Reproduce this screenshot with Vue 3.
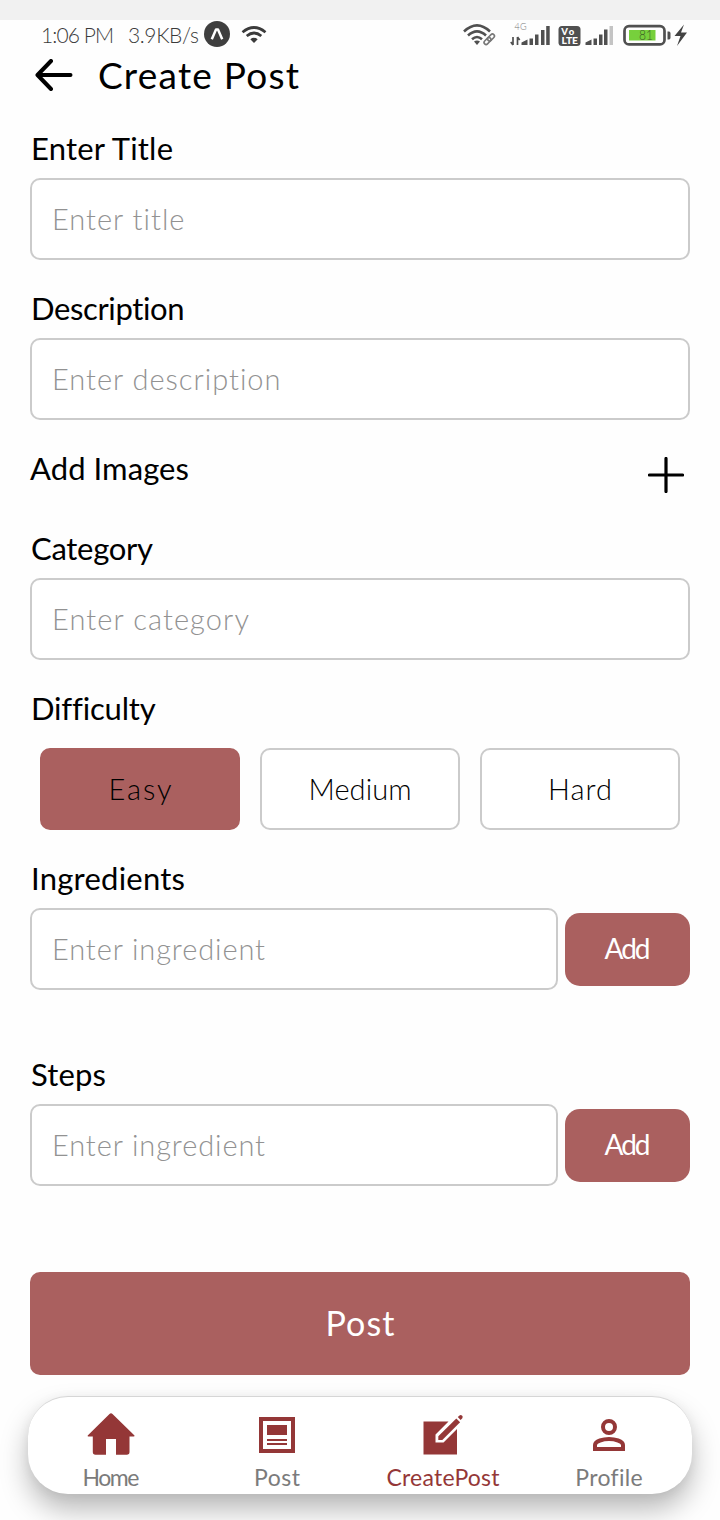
<script setup>
import { ref } from 'vue'

const difficulty = ref('Easy')
const levels = [
  { name: 'Easy', width: 63 },
  { name: 'Medium', width: 103 },
  { name: 'Hard', width: 64 },
]
const lists = [
  { label: 'Ingredients', width: 154 },
  { label: 'Steps', width: 75 },
]

// Tracks a run of text out (or in) so that it fills the given width.
const vFit = {
  mounted(el, { value }) {
    const natural = el.getBoundingClientRect().width
    const step = (value - natural) / (el.textContent.length - 1)
    el.style.letterSpacing = `${step}px`
    el.style.marginRight = `${-step}px`
  },
}
</script>

<template>
  <div class="screen">
    <div class="strip"></div>
    <header class="status">
      <span v-fit="73" class="time">1:06 PM</span>
      <span class="speed"><span v-fit="71">3.9KB/s</span></span>
      <svg class="expo" width="26" height="26" viewBox="0 0 26 26">
        <circle cx="13" cy="13" r="13" fill="#3f3f3f" />
        <path d="M7.8 18.2 12 8.6h2l4.2 9.6" fill="none" stroke="#fff" stroke-width="2.5" stroke-linejoin="round" />
      </svg>
      <svg class="wifi" width="26" height="18" viewBox="0 0 26 18">
        <g fill="none" stroke="#3b3b3b" stroke-width="2.7">
          <path d="M1.5 6.2Q13-3.2 24.5 6.2" />
          <path d="M5.7 10Q13 4 20.3 10" />
        </g>
        <path d="M9.3 13.2Q13 10.4 16.7 13.2L13 17z" fill="#3b3b3b" />
      </svg>
      <span class="grow"></span>
      <svg width="236" height="30" viewBox="0 0 236 30">
        <g fill="none" stroke="#505050" stroke-width="2.6">
          <path d="M2 11.5Q15-0.7 28 11.5" />
          <path d="M6 15.5Q15 7.2 24 15.5" />
          <path d="M10 19.2Q15 14.8 20 19.2" />
        </g>
        <path d="M12 21.5Q15 19.5 18 21.5L15 25z" fill="#505050" />
        <path d="m23 24 8-8" fill="none" stroke="#fff" stroke-width="4" />
        <g fill="none" stroke="#777" stroke-width="1.6">
          <rect x="21.5" y="19" width="8" height="4" rx="2" transform="rotate(-45 25.5 21)" />
          <rect x="25" y="15.5" width="8" height="4" rx="2" transform="rotate(-45 29 17.5)" />
        </g>
        <text x="52.500" y="9.500" font-size="9" fill="#777" textLength="12">4G</text>
        <path d="M51 17v8m0 0-2.2-3M55.5 25v-8m0 0 2.2 3" fill="none" stroke="#505050" stroke-width="1.7" />
        <path d="M59.5 25v-2.5l6-3V25zM67.5 18.5h3.5V25h-3.5zM73 14.5h3.5V25H73zM79 10h3.5v15H79zM84.2 6h3.5v19h-3.5z" fill="#505050" />
        <rect x="96.500" y="6" width="22" height="20" rx="3.5" fill="#505050" />
        <g fill="#fff" font-weight="900" font-size="9.5">
          <text x="99.3" y="15" textLength="13">Vo</text>
          <text x="99.5" y="24.3" textLength="16.5" lengthAdjust="spacingAndGlyphs">LTE</text>
        </g>
        <path d="M123.5 25v-2.5l6-3V25zM131.5 18.5h3.5V25h-3.5zM137 14.5h3.5V25H137zM142 9.5h3.5V25H142z" fill="#505050" />
        <path d="M147.5 6h3.5v19h-3.5z" fill="#c4c4c4" />
        <rect x="162.5" y="6.2" width="40" height="18.2" rx="4.5" fill="none" stroke="#505050" stroke-width="2.7" />
        <rect x="167" y="10" width="26.5" height="10.5" fill="#77d03c" />
        <path d="M205.5 11.5h1.5q1.5 0 1.5 2v4q0 2-1.5 2h-1.5z" fill="#505050" />
        <text x="177" y="20" font-size="13" fill="#3c5d27" textLength="14" lengthAdjust="spacingAndGlyphs">81</text>
        <path d="m222 4.500-9.500 11.500h6l-3.500 10 10-13.500h-6l3-8z" fill="#424242" />
      </svg>
    </header>

    <div class="title">
      <svg width="38" height="32" viewBox="0 0 38 32">
        <path d="M35.5 16H3M16 2 2.5 16 16 30" fill="none" stroke="#000" stroke-width="4" stroke-linecap="round" stroke-linejoin="round" />
      </svg>
      <h1><span v-fit="201">Create Post</span></h1>
    </div>

    <main>
      <section class="field">
        <label><span v-fit="142">Enter Title</span></label>
        <div class="input"><span v-fit="133">Enter title</span></div>
      </section>
      <section class="field">
        <label><span v-fit="154">Description</span></label>
        <div class="input"><span v-fit="229">Enter description</span></div>
      </section>
      <section class="images">
        <label><span v-fit="159">Add Images</span></label>
        <svg width="36" height="36" viewBox="0 0 36 36">
          <path d="M18 1.5v33M1.5 18h33" stroke="#000" stroke-width="3.200" stroke-linecap="round" />
        </svg>
      </section>
      <section class="field">
        <label><span v-fit="122">Category</span></label>
        <div class="input"><span v-fit="197">Enter category</span></div>
      </section>
      <section class="field">
        <label><span v-fit="123">Difficulty</span></label>
        <div class="levels">
          <button
            v-for="level in levels"
            :key="level.name"
            :class="{ active: difficulty === level.name }"
            @click="difficulty = level.name"
          ><span v-fit="level.width">{{ level.name }}</span></button>
        </div>
      </section>
      <section v-for="list in lists" :key="list.label" class="field list">
        <label><span v-fit="list.width">{{ list.label }}</span></label>
        <div class="row">
          <div class="input"><span v-fit="213">Enter ingredient</span></div>
          <button class="add"><span v-fit="46">Add</span></button>
        </div>
      </section>
      <button class="post"><span v-fit="69">Post</span></button>
    </main>

    <nav>
      <a>
        <svg width="48" height="44" viewBox="0 0 48 44">
          <path d="M24 1.3q.8 0 1.5.7L47.5 23.5q.3 1-.8 1H42.5V40q0 2.7-2.7 2.7H29V27H19v15.7H8.500q-2.700 0-2.700-2.700V24.500H1.300q-1-.2-.6-1L22.500 2q.7-.7 1.500-.7z" fill="#943737" />
        </svg>
        <span v-fit="57">Home</span>
      </a>
      <a>
        <svg width="48" height="44" viewBox="0 0 48 44">
          <path d="M8 7h32v32H8z" fill="none" stroke="#943737" stroke-width="4" />
          <path d="M14 13h20v10H14zM14 27h20v2H14zM14 31h20v2H14z" fill="#943737" />
        </svg>
        <span v-fit="46">Post</span>
      </a>
      <a class="active">
        <svg width="48" height="44" viewBox="0 0 48 44">
          <path d="M4.500 9.500h25L16.500 22.500v8h8L38 17v25.500H4.500z" fill="#943737" />
          <path d="m37.300 6.500 3.800 3.800L23.300 28h-4v-3.800z" fill="#943737" />
          <path d="m38.800 5 1.700-1.600q1.200-.900 2.500.200t.300 2.600l-1.700 1.700z" fill="#943737" />
        </svg>
        <span v-fit="113">CreatePost</span>
      </a>
      <a>
        <svg width="48" height="44" viewBox="0 0 48 44">
          <circle cx="24" cy="15" r="6" fill="none" stroke="#943737" stroke-width="4" />
          <path d="M10 37v-4c0-4 8.500-6 14-6s14 2 14 6v4z" fill="none" stroke="#943737" stroke-width="4" />
        </svg>
        <span v-fit="67">Profile</span>
      </a>
    </nav>
  </div>
</template>

<style>
body { background: #fefefe; }
</style>

<style scoped>
.screen {
  box-sizing: border-box;
  height: 1520px;
  overflow: hidden;
  background: #fefefe;
  font-family: Lato, "Open Sans", sans-serif;
  color: #000;
}
.screen span { white-space: nowrap; }
.strip { height: 20px; background: #f1f1f1; }
.status {
  display: flex;
  align-items: center;
  height: 30px;
  padding: 0 22px 0 41px;
  font-size: 21px;
  font-weight: 300;
  color: #3a3a3a;
}
.status span { line-height: 28px; padding-bottom: 1px; }
.speed { padding-left: 14px; }
.status .expo { margin-left: 5px; margin-top: -2px; }
.wifi { margin-left: 11px; }
.grow { flex: 1; }
.title {
  display: flex;
  align-items: center;
  height: 50px;
  padding-left: 35px;
}
h1 { margin: 0 0 0 25px; font-size: 37px; font-weight: 400; line-height: 50px; }
main { padding: 30px 30px 0; }
.field { margin-bottom: 30px; }
label { display: block; height: 36px; padding-left: 1px; line-height: 36px; font-size: 31px; }
.input {
  box-sizing: border-box;
  height: 82px;
  margin-top: 12px;
  padding-left: 20px;
  border: 2px solid #cbcbcb;
  border-radius: 10px;
  background: #fff;
  font-size: 29px;
  font-weight: 300;
  line-height: 77px;
  color: #929292;
}
.images { display: flex; justify-content: space-between; height: 80px; padding-right: 6px; }
.images label { padding-left: 0; }
.images svg { margin-top: 7px; }
button {
  padding: 0 0 2px;
  border: 0;
  font-family: inherit;
  color: #000;
}
.levels { display: flex; gap: 20px; margin: 22px 10px 0; }
.levels button {
  flex: 1;
  height: 82px;
  border: 2px solid #cbcbcb;
  border-radius: 10px;
  background: #fff;
  font-size: 29px;
  font-weight: 300;
}
.levels .active { border-color: #aa605f; background: #aa605f; }
.row { display: flex; align-items: center; gap: 7px; margin-top: 12px; }
.row .input { flex: 1; margin-top: 0; }
.list { height: 130px; margin-bottom: 66px; }
.list + .list { margin-bottom: 0; }
.add {
  width: 125px;
  height: 73px;
  border-radius: 15px;
  background: #aa605f;
  font-size: 28px;
  color: #fff;
}
.post {
  display: block;
  width: 100%;
  height: 103px;
  margin-top: 86px;
  border-radius: 10px;
  background: #aa605f;
  font-size: 34px;
  color: #fff;
}
nav {
  display: flex;
  box-sizing: border-box;
  height: 98px;
  margin: 21px 28px 0;
  border-top: 1px solid #d6d6d6;
  border-radius: 40px;
  background: #fff;
  box-shadow: 0 16px 28px rgba(0, 0, 0, .27), 0 2px 12px rgba(0, 0, 0, .05);
}
nav a {
  display: flex;
  flex: 1;
  flex-direction: column;
  align-items: center;
  padding-top: 15px;
  font-size: 23px;
  line-height: 28px;
  color: #7b7b7b;
}
nav span { margin-top: 7px; }
nav .active { color: #943737; }
</style>
